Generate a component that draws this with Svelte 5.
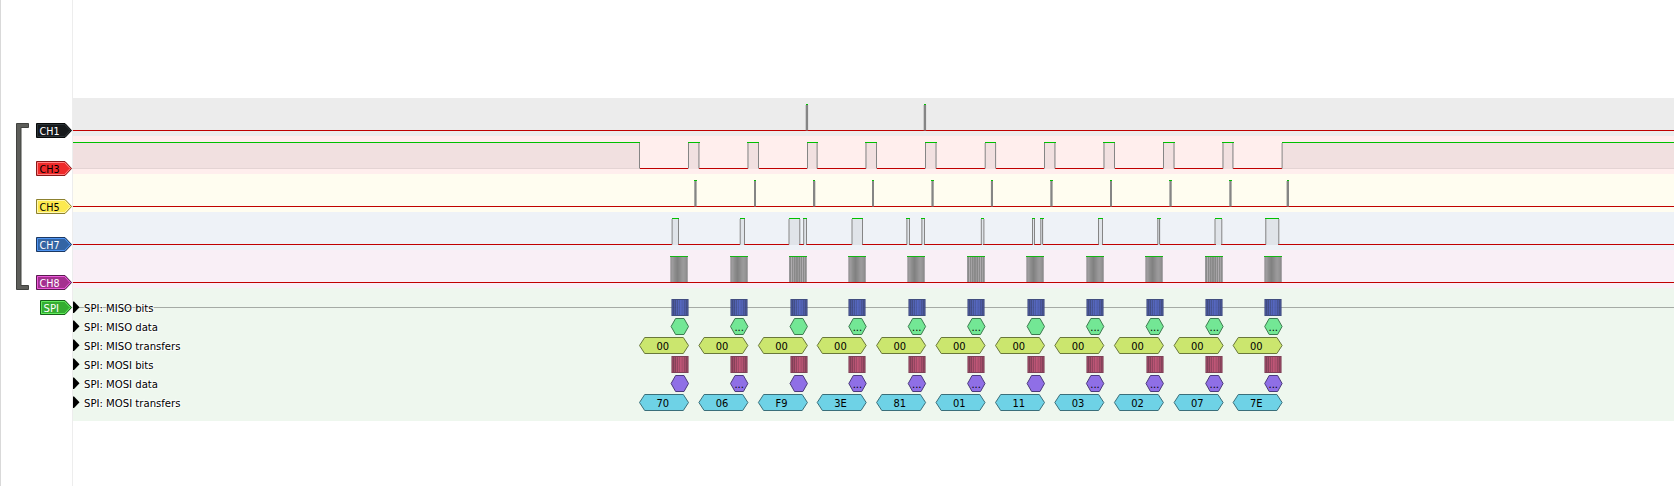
<script>
  const X0 = 73;
  const lanes = [
    { name: 'CH1', bg: '#ececec', fill: '#16191b', line: '#080909', hi: '#2b3337', ink: '#fff',
      edges: [[805.7, 2.4], [923.7, 2.4]], caps: [[806, 2], [924, 2]], highs: [] },
    { name: 'CH3', bg: '#ffeeed', fill: '#ef2929', line: '#8a1818', hi: '#ff8080', ink: '#000',
      edges: [[639, 1], ...[688, 698.4, 747.5, 758, 807, 816.6, 865.5, 876, 925, 935.5, 984.7, 995.1, 1044, 1054.4, 1103.5, 1114, 1163, 1173.5, 1222.5, 1232.4, 1281.6].map((x) => [x, 1])],
      highs: [[73, 640], [688, 700], [747, 759], [807, 818], [865, 877], [925, 937], [985, 996], [1044, 1056], [1103, 1115], [1163, 1175], [1222, 1234], [1282, 1674]] },
    { name: 'CH5', bg: '#fffdf0', fill: '#fce94f', line: '#8c8130', hi: '#fff7ae', ink: '#000',
      edges: [[694.3, 2.3], [754, 2], [813, 2.3], [872, 2], [931.4, 2.3], [990.9, 2.1], [1050.3, 2.3], [1110, 2], [1169.4, 2.3], [1229.3, 2.3], [1286.6, 2.4]],
      caps: [[694, 3], [754, 2], [813, 2], [872, 2], [931, 3], [991, 2], [1050, 3], [1110, 2], [1169, 3], [1229, 3], [1287, 2]], highs: [] },
    { name: 'CH7', bg: '#eef2f7', fill: '#3465a4', line: '#1b3862', hi: '#4f95f3', ink: '#fff',
      edges: [671.6, 678, 739.7, 744, 788.5, 799.3, 803.2, 806, 851.5, 862, 906.4, 909, 921.4, 924, 980.8, 983.4, 1032, 1034, 1040.3, 1042, 1098, 1102, 1157.3, 1159, 1214.5, 1221.3, 1265.3, 1278.3].map((x) => [x, 1]),
      highs: [[672, 679], [740, 745], [789, 800], [803, 807], [852, 863], [906, 910], [921, 925], [981, 984], [1032, 1035], [1040, 1044], [1098, 1103], [1157, 1161], [1215, 1222], [1265, 1279]] },
    { name: 'CH8', bg: '#f9eff6', fill: '#a4308f', line: '#591b50', hi: '#ee5bdc', ink: '#fff',
      edges: [], highs: [], bursts: [670, 730, 789, 848, 907, 967, 1026, 1086, 1145, 1205, 1264] },
  ];
  const lows = {
    CH3: [[640, 688], [699, 748], [759, 807], [817, 866], [877, 925], [936, 985], [996, 1044], [1055, 1104], [1115, 1163], [1174, 1223], [1233, 1282]],
    CH7: gaps([[672, 678], [740, 744], [789, 799], [804, 806], [852, 862], [907, 909], [922, 924], [982, 983], [1033, 1034], [1041, 1043], [1099, 1102], [1158, 1160], [1216, 1221], [1266, 1278]]),
  };
  function gaps(list) {
    const out = [];
    let at = X0;
    for (const [a, b] of list) { out.push([at, a]); at = b; }
    out.push([at, 1674]);
    return out;
  }
  const smooth = ['#b5afb4', '#979697', '#9d9b9d', '#979697', '#8f8f8f', '#8a8a8a', '#858585', '#818181', '#858585', '#8a8a8a', '#8f8e8f', '#959495', '#999899', '#9b9a9b', '#989798', '#949394', '#8d8d8d', '#a9a5a9'];
  const striped = ['#98979a', '#8a8a8a', '#b0adb0', '#8b8b8b', '#a5a3a5', '#898989', '#999899', '#8a8a8a', '#8c8c8c', '#999899', '#878787', '#a5a3a5', '#8a8a8a', '#afabaf', '#8a8a8a', '#a5a3a5', '#8c8c8c', '#a8a5a8'];
  const shade = (i) => (i === 2 || i === 5 || i === 9 ? striped : smooth);

  const starts = [639.2, 698.6, 758.1, 816.9, 876.3, 935.7, 995.2, 1054.5, 1114.1, 1173.8, 1232.8];
  const mosi = ['70', '06', 'F9', '3E', '81', '01', '11', '03', '02', '07', '7E'];
  const plain = [0, 2, 6];
  const glow = [0.2, 0.35, 0.6, 0.8, 1, 0.85, 0.5, 0.2];
  const rows = [
    { label: 'SPI: MISO bits', kind: 'bits', fill: '#6479ea', line: '#3b467c' },
    { label: 'SPI: MISO data', kind: 'data', fill: '#73e795', line: '#3c7b4f' },
    { label: 'SPI: MISO transfers', kind: 'xfer', fill: '#cbe66e', line: '#69783a', text: () => '00' },
    { label: 'SPI: MOSI bits', kind: 'bits', fill: '#e9658c', line: '#7b3a51' },
    { label: 'SPI: MOSI data', kind: 'data', fill: '#8f6fe6', line: '#4b3a7a' },
    { label: 'SPI: MOSI transfers', kind: 'xfer', fill: '#6ed2e6', line: '#3a6f7a', text: (i) => mosi[i] },
  ];
  const widths = { bits: 69.5, data: 74, xfer: 96.5 };
  const hex = (x, w, s) => `${x + 0.5},9.5 ${x + s},1.5 ${x + w - s},1.5 ${x + w - 0.5},9.5 ${x + w - s},17.5 ${x + s},17.5`;
</script>

{#snippet flag(name, fill, line, hi, ink, w)}
  <svg class="flag" width={w} height="15" viewBox="0 0 {w} 15">
    <polygon points="0.5,0.5 {w - 7},0.5 {w - 0.4},7.5 {w - 7},14.5 0.5,14.5" {fill} stroke={line} />
    <polygon points="1.5,1.5 {w - 7.5},1.5 {w - 1.8},7.5 {w - 7.5},13.5 1.5,13.5" fill="none" stroke={hi} />
    <text x="3.6" y="12" fill={ink} textLength={w === 36 ? 20 : 15.5} lengthAdjust="spacingAndGlyphs">{name}</text>
  </svg>
{/snippet}

<div class="view">
  <aside>
    <div class="group">
      <svg class="bracket" width="13" height="167" viewBox="0 0 13 167">
        <path d="M.5 .5H12.5V4.5H5V162.5H12.5V166.5H.5Z" fill="#5d5e5a" stroke="#41423f" />
      </svg>
      <div class="flags">
        {#each lanes as l}
          {@render flag(l.name, l.fill, l.line, l.hi, l.ink, 36)}
        {/each}
      </div>
    </div>
    <div class="decoder-flag">{@render flag('SPI', '#35ad32', '#17601a', '#61ec5c', '#fff', 32)}</div>
  </aside>

  <main>
    {#each lanes as l}
      <svg class="lane" style:background={l.bg} width="1601" height="38" viewBox="73 0 1601 38">
        {#each l.highs as [a, b]}
          <rect x={a} y="7" width={b - a} height="26" fill="#000" fill-opacity=".055" />
          {#if b - a > 100}<rect x={a} y="32" width={b - a} height="1" fill="#000" fill-opacity=".05" />{/if}
        {/each}
        {#each lows[l.name] ?? [[73, 1674]] as [a, b]}
          <rect x={a} y="32" width={b - a} height="1" fill="#c00000" />
        {/each}
        {#each l.edges as [x, w]}
          <rect {x} y="7" width={w} height="25.5" fill="#858585" />
        {/each}
        {#each l.caps ?? l.highs.map(([a, b]) => [a, b - a]) as [x, w]}
          <rect {x} y="6" width={w} height="1" fill="#00c000" />
        {/each}
        {#each l.bursts ?? [] as x, i}
          {#each shade(i) as c, k}
            <rect x={x + k} y="7" width="1" height="25" fill={c} />
          {/each}
          <rect {x} y="6" width="18" height="1" fill="#15b515" />
        {/each}
      </svg>
    {/each}

    <section class="decoder">
      {#each rows as r, n}
        <svg width="1601" height="19" viewBox="73 0 1601 19">
          {#if n === 0}<rect x="73" y="9" width="1601" height="1" fill="#a5aba5" />{/if}
          <polygon points="73,3.5 74,3.5 79.5,9.3 74,15 73,15" fill="#000" />
          <text class="row-label" x="84" y="14" textLength={widths[r.kind]} lengthAdjust="spacingAndGlyphs">{r.label}</text>
          {#each starts as s, i}
            {@const b = Math.round(s + 31.5)}
            {#if r.kind === 'bits'}
              <rect x={b} y="1" width="18" height="17" fill={r.line} fill-opacity=".55" />
              <rect x={b + 1} y="1" width="16" height="17" fill={r.line} fill-opacity=".92" />
              {#each glow as g, k}
                <rect x={b + 1 + k * 2.1} y="2" width="1.1" height="15" fill={r.fill} fill-opacity={g} />
              {/each}
            {:else if r.kind === 'data'}
              <polygon points={hex(s + 31.4, 18.4, 5)} fill={r.fill} stroke={r.line} />
              {#if !plain.includes(i)}<text x={s + 40.5} y="14" text-anchor="middle">...</text>{/if}
            {:else}
              <polygon points={hex(s - 0.2, 50, 5.7)} fill={r.fill} stroke={r.line} />
              <text x={s + 23.5} y="14" text-anchor="middle">{r.text(i)}</text>
            {/if}
          {/each}
        </svg>
      {/each}
    </section>
  </main>
</div>

<style>
  :global(body) { background: #fff; }
  .view {
    display: flex;
    box-sizing: border-box;
    width: 1674px;
    height: 486px;
    overflow: hidden;
    border-left: 1px solid #d9d9d9;
    background: #fff;
    font: 11px 'DejaVu Sans Condensed', 'DejaVu Sans', sans-serif;
  }
  svg { display: block; flex: none; }
  aside {
    box-sizing: border-box;
    width: 72px;
    flex: none;
    padding: 123px 0 0 15px;
    border-right: 1px solid #ededed;
  }
  .group { display: flex; gap: 7px; }
  .flags { display: flex; flex-direction: column; gap: 23px; }
  .flag { overflow: visible; }
  .decoder-flag { display: flex; padding: 10px 0 0 20px; padding-left: 24px; }
  main { display: flex; flex-direction: column; padding-top: 98px; }
  .decoder { height: 133px; box-sizing: border-box; padding-top: 10px; background: #eef7ee; }
  text { font-family: 'DejaVu Sans Condensed', 'DejaVu Sans', sans-serif; font-stretch: condensed; font-size: 11px; }
  .row-label { paint-order: stroke; stroke: #fff; stroke-width: 2px; stroke-opacity: .7; }
</style>
